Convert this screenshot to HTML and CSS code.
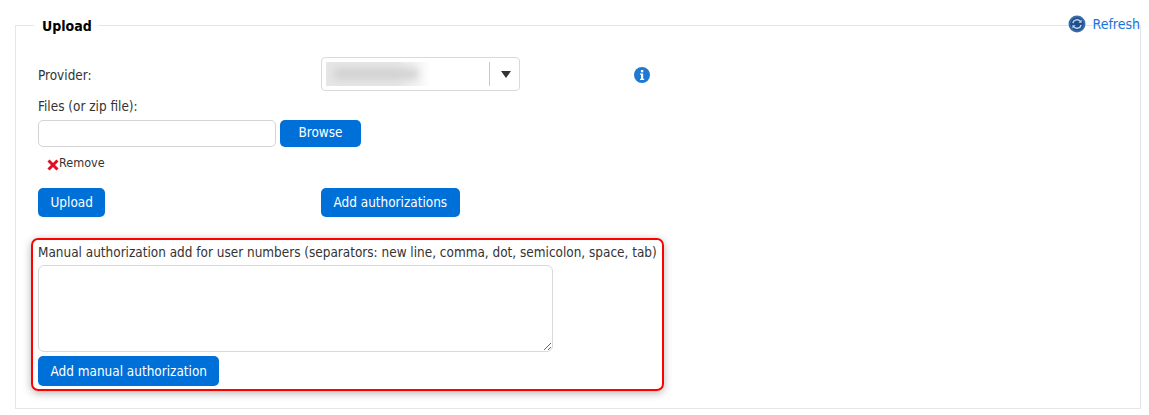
FILE: index.html
```html
<!DOCTYPE html>
<html lang="en">
	<head>
		<meta charset="UTF-8">
		<title>Upload</title>
		<link rel="stylesheet" href="styles.css">
	</head>
	<body>
		<div class="page">
			<a class="refresh" href="#">
				<svg class="refresh-icon" width="18" height="18" viewBox="0 0 18 18">
					<circle cx="9" cy="9" r="8.5" fill="#3a6ea8"/>
					<circle cx="9" cy="9" r="6.5" fill="#1d4f8f"/>
					<path d="M4.8 8.2A4.3 4.3 0 0 1 12.4 6.4M13.2 9.8A4.3 4.3 0 0 1 5.6 11.6" fill="none" stroke="#c4d6ea" stroke-width="1.4"/>
					<path d="M13.6 4.6v3.2h-3.2zM4.4 13.4v-3.2h3.2z" fill="#c4d6ea"/>
				</svg>
				Refresh
			</a>
			<fieldset class="frame">
				<legend>Upload</legend>
				<div class="row provider">
					<label>Provider:</label>
					<div class="select">
						<span class="value"><span class="blur"></span></span>
						<span class="divider"></span>
						<span class="arrow"></span>
					</div>
					<svg class="info" width="16" height="16" viewBox="0 0 16 16">
						<circle cx="8" cy="8" r="8" fill="#1f78d1"/>
						<rect x="6.9" y="3" width="2.4" height="2.3" fill="#fff"/>
						<path d="M6 6.6h3.2v5.2h1v1.2H6v-1.2h1V7.8H6z" fill="#fff"/>
					</svg>
				</div>
				<div class="files">
					<label>Files (or zip file):</label>
					<div class="file-row">
						<input type="text" class="file-input">
						<button type="button" class="btn browse">Browse</button>
					</div>
					<div class="remove">
						<svg width="12" height="12" viewBox="0 0 12 12">
							<path d="M1.5 1.5l9 9M10.5 1.5l-9 9" stroke="#e01020" stroke-width="3"/>
						</svg>
						<span>Remove</span>
					</div>
				</div>
				<div class="row actions">
					<div class="action-col"><button type="button" class="btn">Upload</button></div>
					<button type="button" class="btn">Add authorizations</button>
				</div>
				<div class="manual">
					<label>Manual authorization add for user numbers (separators: new line, comma, dot, semicolon, space, tab)</label>
					<textarea class="manual-text"></textarea>
					<button type="button" class="btn manual-btn">Add manual authorization</button>
				</div>
			</fieldset>
		</div>
	</body>
</html>
```

FILE: styles.css
```css
* {
	box-sizing: border-box;
}

html, body {
	background: #fff;
}

body {
	margin: 0;
	padding: 14px 9px 0 15px;
	height: 415px;
	overflow: hidden;
	font-family: "DejaVu Sans Condensed", "DejaVu Sans", sans-serif;
	font-size: 13.45px;
	color: #333;
}

.page {
	position: relative;
}

.refresh {
	position: absolute;
	top: 1px;
	right: 0;
	display: flex;
	align-items: center;
	gap: 7px;
	color: #1a73d9;
	text-decoration: none;
	font-size: 14px;
	line-height: 18px;
	z-index: 1;
}

.frame {
	margin: 0;
	width: 1126px;
	height: 395px;
	padding: 21px 16px 0 22px;
	border: 1px solid #e6e6e6;
}

.frame legend {
	margin-left: -4px;
	padding: 2px 6px 0 8px;
	font-weight: bold;
	font-size: 14px;
	line-height: 20px;
	color: #000;
}

.row {
	display: flex;
	align-items: center;
}

.provider label {
	width: 283px;
	margin-top: 2px;
}

.select {
	display: flex;
	align-items: center;
	width: 199px;
	height: 34px;
	padding: 4px;
	border: 1px solid #d9d9d9;
	border-radius: 4px;
}

.value {
	flex: 1;
	height: 24px;
	display: flex;
	align-items: center;
	overflow: hidden;
	background: linear-gradient(to right, #e6e6e6 0%, #e6e6e6 50%, #fff 74%);
}

.blur {
	display: block;
	width: 84px;
	height: 10px;
	margin-left: 8px;
	background: #cfcfcf;
	filter: blur(4px);
}

.divider {
	width: 1px;
	height: 24px;
	margin-left: 21px;
	background: #c8c8c8;
}

.arrow {
	width: 0;
	height: 0;
	margin: 0 4px 0 11px;
	border-left: 5px solid transparent;
	border-right: 5px solid transparent;
	border-top: 7px solid #333;
}

.info {
	margin-left: 114px;
	margin-top: 1px;
}

.files {
	margin-top: 7px;
}

.files label {
	display: block;
	line-height: 18px;
}

.file-row {
	display: flex;
	gap: 4px;
	margin-top: 4px;
}

.file-input {
	width: 238px;
	height: 27px;
	border: 1px solid #d4d4d4;
	border-radius: 5px;
}

.btn {
	height: 29px;
	padding: 0 12.5px;
	border: 0;
	border-radius: 5px;
	background: #0070d9;
	color: #fff;
	font-family: "DejaVu Sans Condensed", "DejaVu Sans", sans-serif;
	font-size: 13.45px;
}

.browse {
	height: 27px;
	width: 81px;
	padding: 0 0 3px;
}

.remove {
	display: flex;
	margin: 8px 0 0 9px;
	font-size: 12.5px;
	line-height: 16px;
}

.remove svg {
	margin-top: 4px;
}

.actions {
	margin-top: 17px;
}

.action-col {
	width: 283px;
}

.manual {
	display: flex;
	flex-direction: column;
	align-items: flex-start;
	width: 633px;
	height: 153px;
	margin: 21px 0 0 -7px;
	padding: 3px 5px 0 5px;
	border: 2px solid #f00;
	border-radius: 7px;
	box-shadow: 0 2px 9px rgba(0, 0, 0, 0.3);
}

.manual label {
	line-height: 19px;
	white-space: nowrap;
}

.manual-text {
	width: 515px;
	height: 87px;
	margin-top: 3px;
	border: 1px solid #d9d9d9;
	border-radius: 6px;
}

.manual-btn {
	height: 30px;
	margin-top: 4px;
}
```
